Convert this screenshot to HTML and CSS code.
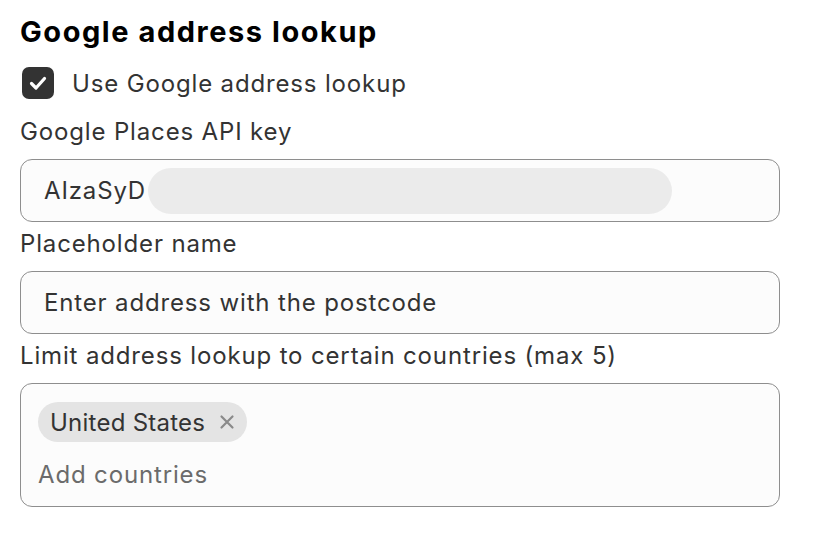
FILE: index.html
```html
<!DOCTYPE html>
<html lang="en">
<head>
<meta charset="utf-8">
<title>Google address lookup</title>
<link rel="stylesheet" href="styles.css">
</head>
<body>
<main class="panel">
  <h2 class="title">Google address lookup</h2>
  <label class="check-row">
    <span class="checkbox">
      <svg width="32" height="32" viewBox="0 0 32 32" aria-hidden="true"><path d="M9.5 16.5 L14 21 L22.5 11.5" fill="none" stroke="#fff" stroke-width="3.2" stroke-linecap="round" stroke-linejoin="round"/></svg>
    </span>
    <span class="check-label">Use Google address lookup</span>
  </label>

  <div class="field">
    <div class="label">Google Places API key</div>
    <div class="input"><span class="value">AIzaSyD</span><span class="redact"></span></div>
  </div>

  <div class="field">
    <div class="label">Placeholder name</div>
    <div class="input"><span class="value">Enter address with the postcode</span></div>
  </div>

  <div class="field">
    <div class="label">Limit address lookup to certain countries (max 5)</div>
    <div class="tags-box">
      <div class="chips">
        <span class="chip"><span class="chip-text">United States</span>
          <svg class="chip-x" width="16" height="16" viewBox="0 0 16 16" aria-hidden="true"><path d="M2.5 2.5 L13.5 13.5 M13.5 2.5 L2.5 13.5" stroke="#8a8a8a" stroke-width="2.2" stroke-linecap="round"/></svg>
        </span>
      </div>
      <div class="add">Add countries</div>
    </div>
  </div>
</main>
</body>
</html>
```

FILE: styles.css
```css
* { box-sizing: border-box; }
html, body { margin: 0; background: #fff; }
body {
  font-family: Inter, "Noto Sans", sans-serif;
  color: #333;
}
.panel {
  padding: 15px 48px 0 20px;
  display: flex;
  flex-direction: column;
}
.title {
  margin: 0;
  font-size: 29px;
  line-height: 34px;
  font-weight: 700;
  letter-spacing: 1.55px;
  color: #000;
}
.check-row {
  margin-top: 18px;
  display: flex;
  align-items: center;
  gap: 18px;
  padding-left: 2px;
}
.checkbox {
  width: 32px;
  height: 32px;
  border-radius: 7px;
  background: #333;
  display: flex;
}
.check-label, .label, .value, .chip, .add {
  font-size: 24px;
  line-height: 29px;
  letter-spacing: 0.85px;
}
.field { display: flex; flex-direction: column; }
.check-row + .field { margin-top: 18px; }
.field + .field { margin-top: 7px; }
.label { margin-bottom: 13px; color: #333; }
.input {
  height: 63px;
  border: 1px solid #8e8e8e;
  border-radius: 12px;
  background: #fcfcfc;
  display: flex;
  align-items: center;
  padding-left: 23px;
  color: #333;
}
.redact {
  width: 524px;
  height: 46px;
  margin-left: 2px;
  border-radius: 23px;
  background: #ebebeb;
}
.tags-box {
  height: 124px;
  border: 1px solid #8e8e8e;
  border-radius: 12px;
  background: #fcfcfc;
  padding: 18px 17px;
  display: flex;
  flex-direction: column;
  gap: 18px;
}
.chips { display: flex; }
.chip {
  height: 40px;
  border-radius: 20px;
  background: #e4e4e4;
  padding: 0 12px;
  display: flex;
  align-items: center;
  gap: 14px;
  color: #333;
  letter-spacing: 0.25px;
}
.add { color: #6b6b6b; }
```
